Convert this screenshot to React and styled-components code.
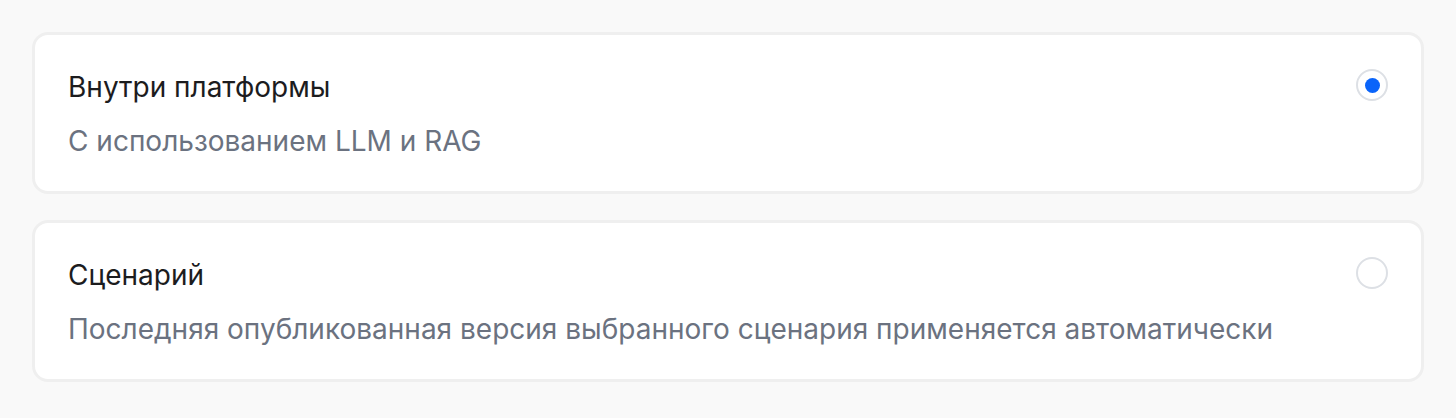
import styled, { createGlobalStyle } from "styled-components";

const GlobalStyle = createGlobalStyle`
  body {
    margin: 0;
    background: #f9f9f9;
    font-family: Inter, "Noto Sans", sans-serif;
  }
`;

const Page = styled.div`
  display: flex;
  flex-direction: column;
  gap: 26px;
  padding: 32px;
`;

const Card = styled.label`
  display: flex;
  align-items: flex-start;
  justify-content: space-between;
  background: #fff;
  border: 3px solid #efefef;
  border-radius: 16px;
  padding: 34px 33px 32px 33px;
  cursor: pointer;
`;

const Texts = styled.div`
  display: flex;
  flex-direction: column;
  gap: 18px;
`;

const Title = styled.div`
  font-size: 28px;
  line-height: 36px;
  color: #1c1c1e;
`;

const Subtitle = styled.div`
  font-size: 28px;
  line-height: 36px;
  color: #6b7280;
`;

const Radio = styled.span`
  flex: 0 0 auto;
  width: 32px;
  height: 32px;
  box-sizing: border-box;
  border-radius: 50%;
  border: 2px solid #dde0e5;
  display: flex;
  align-items: center;
  justify-content: center;

  &::after {
    content: "";
    width: 15px;
    height: 15px;
    border-radius: 50%;
    background: ${(p) => (p.$checked ? "#0a64fa" : "transparent")};
  }
`;

const options = [
  { title: "Внутри платформы", text: "С использованием LLM и RAG", checked: true },
  {
    title: "Сценарий",
    text: "Последняя опубликованная версия выбранного сценария применяется автоматически",
    checked: false,
  },
];

const App = () => (
  <>
    <GlobalStyle />
    <Page>
      {options.map((o) => (
        <Card key={o.title}>
          <Texts>
            <Title>{o.title}</Title>
            <Subtitle>{o.text}</Subtitle>
          </Texts>
          <Radio $checked={o.checked} />
        </Card>
      ))}
    </Page>
  </>
);

export default App;
